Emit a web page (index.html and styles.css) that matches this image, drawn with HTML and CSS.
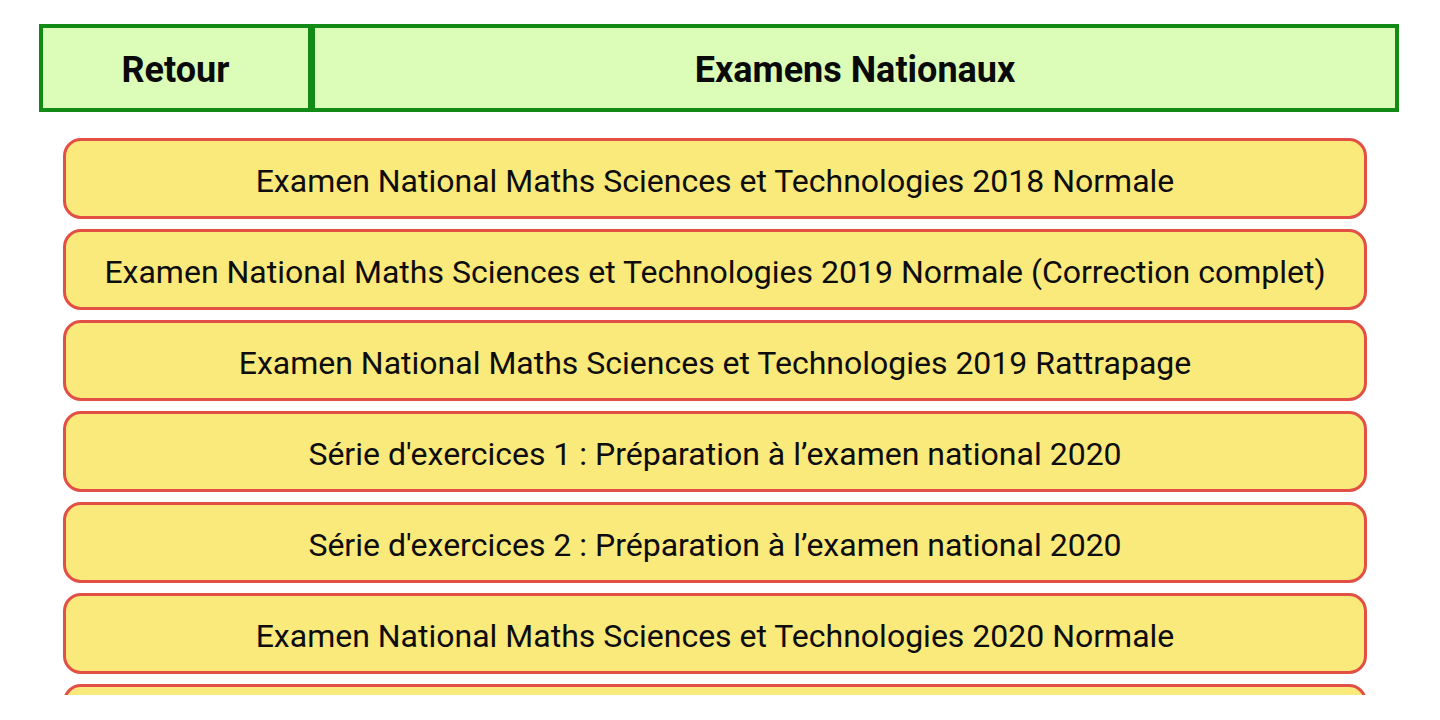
FILE: index.html
```html
<!DOCTYPE html>
<html lang="fr">
<head>
<meta charset="utf-8">
<title>Examens Nationaux</title>
<link rel="stylesheet" href="styles.css">
</head>
<body>
<div class="page">
  <header class="topbar">
    <div class="cell back">Retour</div>
    <div class="cell title">Examens Nationaux</div>
  </header>
  <main class="list">
    <a class="item">Examen National Maths Sciences et Technologies 2018 Normale</a>
    <a class="item">Examen National Maths Sciences et Technologies 2019 Normale (Correction complet)</a>
    <a class="item">Examen National Maths Sciences et Technologies 2019 Rattrapage</a>
    <a class="item">Série d'exercices 1 : Préparation à l’examen national 2020</a>
    <a class="item">Série d'exercices 2 : Préparation à l’examen national 2020</a>
    <a class="item">Examen National Maths Sciences et Technologies 2020 Normale</a>
    <a class="item">Examen National Maths Sciences et Technologies 2020 Rattrapage</a>
  </main>
</div>
</body>
</html>
```
FILE: styles.css
```css
html, body {
  margin: 0;
  padding: 0;
  background: #ffffff;
}
body {
  font-family: Roboto, "Noto Sans", "Liberation Sans", sans-serif;
  color: #111;
}
.page {
  padding: 24px 41px 0 39px;
}
.topbar {
  display: flex;
  height: 80px;
  border: 4px solid #128a16;
  background: #dbfdb8;
}
.cell {
  display: flex;
  align-items: center;
  justify-content: center;
  padding-top: 3px;
  font-weight: 700;
  font-size: 36px;
  color: #0a0a0a;
}
.back {
  width: 265px;
  border-right: 7px solid #128a16;
}
.title {
  flex: 1;
}
.list {
  margin: 22px 32px 0 24px;
  height: 561px;
  overflow: hidden;
  display: flex;
  flex-direction: column;
  gap: 10px;
  padding-top: 4px;
  box-sizing: border-box;
}
.item {
  flex: 0 0 81px;
  box-sizing: border-box;
  display: flex;
  align-items: center;
  justify-content: center;
  padding-top: 4px;
  background: #fae97b;
  border: 3px solid #e24f45;
  border-radius: 18px;
  font-size: 32px;
  color: #0d0d0d;
  text-decoration: none;
  white-space: nowrap;
}
```
